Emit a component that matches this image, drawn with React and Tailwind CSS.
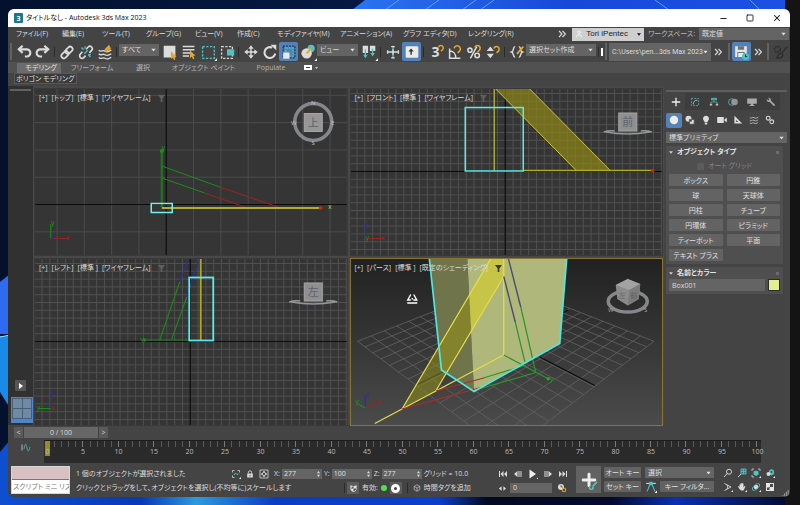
import React, { useState } from 'react';
import { Minus, Square, X, User, Plus } from 'lucide-react';

const TEAL = '#4fc3c3';
const GOLD = '#e5a82e';
const LIGHT = '#dcdcdc';

const menus = [
  'ファイル(F)',
  '編集(E)',
  'ツール(T)',
  'グループ(G)',
  'ビュー(V)',
  '作成(C)',
  'モディファイヤ(M)',
  'アニメーション(A)',
  'グラフ エディタ(D)',
  'レンダリング(R)',
];

const primitives = [
  'ボックス',
  '円錐',
  '球',
  '天球体',
  '円柱',
  'チューブ',
  '円環体',
  'ピラミッド',
  'ティーポット',
  '平面',
  'テキスト プラス',
];

// Every glyph is drawn on a 20x20 board
const glyphs = {
  undo: (
    <g fill="none" stroke={LIGHT} strokeWidth="2.4">
      <path d="M5 7h8a3.5 3.5 0 0 1 0 8h-2" />
      <path d="M8.5 3L4.2 7l4.3 4" />
    </g>
  ),
  redo: (
    <g fill="none" stroke={LIGHT} strokeWidth="2.4">
      <path d="M15 7H7a3.5 3.5 0 0 0 0 8h2" />
      <path d="M11.5 3l4.3 4-4.3 4" />
    </g>
  ),
  link: (
    <g fill="none" stroke={LIGHT} strokeWidth="1.9">
      <rect x="9.5" y="3.5" width="5.5" height="9" rx="2.7" transform="rotate(45 12.2 8)" />
      <rect x="5" y="8.5" width="5.5" height="9" rx="2.7" transform="rotate(45 7.7 13)" />
    </g>
  ),
  unlink: (
    <g fill="none" stroke={LIGHT} strokeWidth="1.8">
      <path d="M10 7l2.4-2.6a2.6 2.6 0 0 1 3.8 3.8L13.8 11" />
      <path d="M9.5 14l-2 2.2a2.6 2.6 0 0 1-3.8-3.8L6 9.8" />
      <path d="M5 5l2.5 2.5M12.5 13l2.5 2.5M8 12l4-4M9 3.500v2.500M15.500 13h-3" stroke={TEAL} strokeWidth="1.4" />
    </g>
  ),
  bind: (
    <g fill="none" stroke={LIGHT} strokeWidth="1.5">
      <path d="M3 8c3 3 4-1 7 1s4 0 7-1M3 12c3 3 4-1 7 1s4 0 7-1M3 16c3 3 4-1 7 1s4 0 7-1" />
      <path d="M10 8l5-5M11 10l5-5" stroke={GOLD} strokeWidth="2" />
    </g>
  ),
  pick: (
    <g>
      <path d="M3 3h13v13H3z" fill={LIGHT} />
      <path d="M11 9v9l2-2 1.500 3 1.500-.8-1.400-2.900h2.700z" fill={GOLD} />
    </g>
  ),
  byName: (
    <g>
      <path d="M3 4h13M3 7.500h13M3 11h9M3 14.500h7" stroke={LIGHT} strokeWidth="1.7" />
      <path d="M11 8v9l2-2 1.500 3 1.500-.8-1.400-2.900h2.700z" fill={GOLD} />
    </g>
  ),
  region: (
    <g>
      <path d="M4 4h13v13H4z" fill="none" stroke={TEAL} strokeWidth="1.5" strokeDasharray="2.500 1.600" />
      <path d="M20 17v3h-3z" fill="#fff" />
    </g>
  ),
  crossing: (
    <g>
      <path d="M4 4h12v13H4z" fill="none" stroke={LIGHT} strokeWidth="1.400" strokeDasharray="2.500 1.600" />
      <path d="M10 7h8v7h-8z" fill={TEAL} />
    </g>
  ),
  move: (
    <g fill={LIGHT}>
      <path d="M9.200 5h1.600v10H9.200zM5 9.200h10v1.600H5z" />
      <path d="M10 2.500l3 3.800H7zM10 17.500l3-3.800H7zM2.500 10l3.800-3v6zM17.500 10l-3.800-3v6z" />
    </g>
  ),
  rotate: (
    <g>
      <path d="M12.500 5.200a6 6 0 1 0 3.300 6.500" fill="none" stroke={LIGHT} strokeWidth="2.300" />
      <path d="M10.500 2h6.500v6z" fill={LIGHT} />
    </g>
  ),
  scale: (
    <g>
      <path d="M3.500 3.500h13v13h-13z" fill="none" stroke="#1e3a57" strokeWidth="1.500" strokeDasharray="2 1.300" />
      <path d="M6.500 5.500h8v9h-8z" fill="none" stroke={TEAL} strokeWidth="1.500" strokeDasharray="2 1.300" />
      <path d="M3.500 10.500h7v7h-7z" fill="#e8e8e8" />
    </g>
  ),
  place: (
    <g>
      <circle cx="13.500" cy="6" r="4" fill={TEAL} />
      <circle cx="8.500" cy="11.500" r="5.800" fill={LIGHT} />
      <path d="M8.500 11.500l5-5.500" stroke={GOLD} strokeWidth="2.200" />
      <path d="M20 17v3h-3z" fill="#fff" />
    </g>
  ),
  pivot: (
    <g>
      <path d="M3 3h6v8H3zM11 3h6v6h-6z" fill={LIGHT} />
      <path d="M6 7v8M14 6v7" stroke={TEAL} strokeWidth="1.500" />
      <path d="M6 17l-2.500-4h5zM14 15l-2.500-4h5z" fill={TEAL} />
      <path d="M20 17v3h-3z" fill="#fff" />
    </g>
  ),
  manipulate: (
    <g>
      <path d="M10 3v14" stroke={TEAL} strokeWidth="1.500" />
      <path d="M3.500 10h13M10 7v6M4 8v4M16 8v4M8 4h4M8 16.500h4" stroke={LIGHT} strokeWidth="1.500" />
    </g>
  ),
  keyboard: (
    <g>
      <rect x="3" y="3.500" width="14" height="13" rx="1.500" fill="#ecebe6" />
      <path d="M9 6l3 3.500H9.800V13H8.200V9.500H6z" fill="#333" />
    </g>
  ),
  angle: (
    <g fill="none" strokeWidth="1.700">
      <path d="M4 6v11h12M4 9c4 0 7 3 7 8" stroke={LIGHT} />
      <path d="M9 6a3.500 3.500 0 1 1 6 3l-2 2" stroke={GOLD} />
    </g>
  ),
  percent: (
    <g fill="none" strokeWidth="1.700">
      <path d="M13 4L6 17" stroke={LIGHT} />
      <circle cx="5.500" cy="8" r="2.300" stroke={LIGHT} />
      <circle cx="13.500" cy="14" r="2.500" stroke={LIGHT} />
      <path d="M11 5a3 3 0 1 1 5 3l-2 2" stroke={GOLD} />
    </g>
  ),
  spinner: (
    <g>
      <path d="M7 4l4 5H3zM7 17l4-5H3z" fill={LIGHT} />
      <path d="M11 6a3 3 0 1 1 5 3l-2 2" fill="none" stroke={GOLD} strokeWidth="1.700" />
    </g>
  ),
  braces: (
    <g fill="none" strokeWidth="1.600">
      <path d="M8 4C5 4 7 9 4 10c3 1 1 6 4 6M12 4c3 0 1 5 4 6-3 1-1 6-4 6" stroke={LIGHT} />
      <path d="M10 12l7-8" stroke={GOLD} strokeWidth="2" />
    </g>
  ),
  save: (
    <g>
      <path d="M3.500 3.500h13v12h-13z" fill="#e4e4e4" />
      <path d="M6.500 3.500h7v4h-7zM6 10h8v5.500H6z" fill="#69727c" />
      <path d="M7 11h6v4.500H7z" fill="#eee" />
      <circle cx="15" cy="15" r="4" fill={TEAL} />
      <path d="M15 12.800v2.400h2" stroke="#124" fill="none" />
    </g>
  ),
  brush: (
    <g fill="none" stroke="#2c2c2c" strokeWidth="1.600">
      <circle cx="6" cy="7" r="3.200" strokeDasharray="2 1" />
      <path d="M17 4l-6 7M9 11.500c3 0 4 2 2 4s-5 1-6 1c2-1 1-4 4-5z" />
    </g>
  ),
  plus: <path d="M10 3v14M3 10h14" stroke="#f0f0f0" strokeWidth="2.200" />,
  modify: (
    <g fill="none" strokeWidth="1.500">
      <path d="M4 4h12v12H4z" stroke={TEAL} strokeDasharray="3 2" />
      <path d="M7 14c0-5 3-7 7-7" stroke={LIGHT} />
    </g>
  ),
  hierarchy: (
    <g>
      <path d="M5 3h10v4H5z" fill={TEAL} />
      <path d="M10 7v3M5 13v-3h10v3" stroke={TEAL} fill="none" strokeWidth="1.500" />
      <path d="M3 13h4v3H3zM13 13h4v3h-4z" fill={LIGHT} />
    </g>
  ),
  motion: (
    <g>
      <circle cx="8" cy="10" r="5.500" fill="none" stroke={TEAL} strokeWidth="1.500" />
      <circle cx="12.500" cy="10" r="5.500" fill="#a8a8a8" />
    </g>
  ),
  display: <path d="M2 4h16v9H2zM8 13h4v2h2v1.500H6V15h2z" fill="#c4c4c4" />,
  wrench: (
    <path d="M3 5a4 4 0 0 0 5 5l7 7 2-2-7-7a4 4 0 0 0-5-5l2.500 2.500-2 2z" fill="#c0c0c0" />
  ),
  sphere: <circle cx="10" cy="10" r="7" fill="#ececec" />,
  shapes: (
    <g>
      <circle cx="7.500" cy="8" r="5" fill={LIGHT} />
      <path d="M9 9h8v8H9z" fill={LIGHT} stroke="#444" strokeWidth="1.200" />
      <circle cx="11" cy="11" r="2" fill="#444" />
    </g>
  ),
  light: (
    <path d="M10 3a5 5 0 0 1 3 9l-1 2H8l-1-2a5 5 0 0 1 3-9zM8 15h4v2.500H8z" fill={LIGHT} />
  ),
  camera: <path d="M2 5h11v10H2zM14 9l4-3v8l-4-3z" fill={LIGHT} />,
  helper: <path d="M4 3l13 13H4zM7 10v3.500h3.500z" fill={LIGHT} fillRule="evenodd" />,
  waves: (
    <path
      d="M3 6c3 3 4-2 7 0s4 1 7-1M3 10.500c3 3 4-2 7 0s4 1 7-1M3 15c3 3 4-2 7 0s4 1 7-1"
      fill="none"
      stroke="#c4c4c4"
      strokeWidth="1.400"
    />
  ),
  gears: (
    <g fill="none" stroke={LIGHT} strokeWidth="1.800">
      <circle cx="7" cy="7" r="3.200" />
      <circle cx="13" cy="13" r="3.200" />
    </g>
  ),
  isolate: (
    <g fill="none" stroke={LIGHT} strokeWidth="1.500">
      <path d="M3 7V3h4M13 3h4v4M3 13v4h4" />
      <path d="M6 12l3-4 3 3 3-1" stroke={TEAL} strokeWidth="2" />
      <path d="M20 16v4h-4z" fill="#fff" stroke="none" />
    </g>
  ),
  lock: (
    <g>
      <path d="M3 9h14v10H3z" fill={LIGHT} />
      <path d="M6 9V6a4 4 0 0 1 8 0v3" fill="none" stroke={LIGHT} strokeWidth="2.200" />
      <path d="M9 12h2v4H9z" fill="#444" />
    </g>
  ),
  absolute: (
    <g fill="none" stroke={LIGHT} strokeWidth="1.600">
      <path d="M2 2h16v16H2z" />
      <circle cx="10" cy="10" r="3.500" />
      <path d="M10 4v3M10 13v3M4 10h3M13 10h3" strokeWidth="2.500" />
    </g>
  ),
  first: <path d="M2 4h2v12H2zM11 4v12l-6-6zM18 4v12l-6-6z" fill={LIGHT} />,
  prev: <path d="M9 4v12l-7-6zM11 4h2v12h-2zM15 4h2v12h-2z" fill={LIGHT} />,
  play: <path d="M3 1l13 9-13 9zM20 17v3h-3z" fill="#f0f0f0" />,
  next: <path d="M3 4h2v12H3zM7 4h2v12H7zM11 4v12l7-6z" fill={LIGHT} />,
  last: <path d="M2 4v12l6-6zM9 4v12l6-6zM16 4h2v12h-2z" fill={LIGHT} />,
  keyMode: <path d="M8 5v10l-6-5zM12 5v10l6-5z" fill={LIGHT} />,
  timeConfig: (
    <g>
      <circle cx="8" cy="8" r="6" fill={LIGHT} />
      <path d="M8 4v4h4" fill="none" stroke="#444" strokeWidth="1.500" />
      <circle cx="14" cy="14" r="3.500" fill="#444" stroke={GOLD} strokeWidth="2.200" />
    </g>
  ),
  tangent: (
    <g fill="none" stroke={TEAL} strokeWidth="1.800">
      <path d="M3 17C6 16 6 5 10 5s4 11 7 12" />
      <path d="M2 4h16" stroke={LIGHT} />
      <path d="M8 2h4v4H8z" fill={TEAL} />
      <path d="M20 16v4h-4z" fill="#fff" stroke="none" />
    </g>
  ),
  zoomOne: (
    <g fill="none" stroke={LIGHT} strokeWidth="1.900">
      <circle cx="12" cy="7.500" r="5" />
      <path d="M8.500 11L2 18" />
    </g>
  ),
  zoomAll: (
    <g fill="none" stroke={TEAL} strokeWidth="1.800">
      <path d="M8 2h10v10H8zM13 2v10M8 7h10" fill="#35787a" />
      <path d="M8 12l-6 6" stroke={LIGHT} />
    </g>
  ),
  extents: (
    <g fill="none" stroke={LIGHT} strokeWidth="1.500">
      <path d="M2 6V2h4M14 2h4v4M2 14v4h4" />
      <path d="M5 7l5-2 5 2v6l-5 3-5-3z" fill={TEAL} stroke="none" />
      <path d="M20 16v4h-4z" fill="#fff" stroke="none" />
    </g>
  ),
  extentsAll: (
    <g>
      <path d="M8 5l5-3 5 3v7l-5 3-5-3z" fill={TEAL} />
      <circle cx="7" cy="12" r="4" fill={LIGHT} />
      <circle cx="13" cy="8" r="2" fill="#444" />
      <path d="M20 16v4h-4z" fill="#fff" />
    </g>
  ),
  fov: (
    <g>
      <path d="M3 3l13 7-13 7M8 6c2 3 2 5 0 8" fill="none" stroke={LIGHT} strokeWidth="1.800" />
      <path d="M20 16v4h-4z" fill="#fff" />
    </g>
  ),
  pan: (
    <g>
      <path d="M5 10V5h2v4-6h2v6-7h2v7-6h2v8l2-3 2 1-4 8H8l-4-4-2-4 1-1z" fill={LIGHT} />
      <path d="M20 16v4h-4z" fill="#fff" />
    </g>
  ),
  orbit: (
    <g>
      <circle cx="10" cy="10" r="4.500" fill={LIGHT} />
      <ellipse cx="10" cy="10" rx="9" ry="4" fill="none" stroke={TEAL} strokeWidth="1.800" transform="rotate(-40 10 10)" />
      <path d="M20 16v4h-4z" fill="#fff" />
    </g>
  ),
  maximize: (
    <g>
      <path d="M2 2h16v16H2z" fill="#e6e6e6" />
      <path d="M10 4h6v6h-6zM4 11h5v5H4z" fill="#4a4a4a" />
      <path d="M7 13l6-6" stroke="#4a4a4a" strokeWidth="1.500" />
    </g>
  ),
  shield: (
    <g>
      <path d="M3 3c5 2 9 2 14 0v7c0 4-3 6-7 8-4-2-7-4-7-8z" fill={LIGHT} />
      <path d="M10 4v6H3.500zM10 10h6c0 3-3 5-6 6z" fill="#555" />
    </g>
  ),
  cube: (
    <g fill="none" stroke={LIGHT} strokeWidth="1.500">
      <path d="M10 2l7 4v8l-7 4-7-4V6z" />
      <path d="M3 6l7 4 7-4M10 10v8" />
    </g>
  ),
  curve: (
    <g fill="none" strokeWidth="1.500">
      <path d="M2 3v12" stroke={LIGHT} />
      <path d="M6 12c2-12 4-12 6-2s4 6 6-2" stroke={TEAL} />
    </g>
  ),
};

const Glyph = ({ name, className = 'size-[18px]' }) => (
  <svg viewBox="0 0 20 20" className={`shrink-0 ${className}`} aria-hidden="true">
    {glyphs[name]}
  </svg>
);

const Tool = ({ name, active }) => (
  <button
    type="button"
    aria-label={name}
    className={`flex h-[19px] w-[19px] shrink-0 items-center justify-center rounded-xs ${
      active ? 'bg-[#5482b8]' : ''
    }`}
  >
    {name === 'snap' ? (
      <span className="relative font-['Open_Sans'] text-[14px] leading-none font-bold text-[#dcdcdc]">
        3
        <svg viewBox="0 0 10 10" className="absolute -top-px left-[6px] size-2">
          <path d="M2 4a3 3 0 1 1 5 3L5 9" fill="none" stroke={GOLD} strokeWidth="1.800" />
        </svg>
      </span>
    ) : (
      <Glyph name={name} />
    )}
  </button>
);

const Small = ({ name, className = 'size-[10px]' }) => (
  <button type="button" aria-label={name} className="flex shrink-0 items-center justify-center">
    <Glyph name={name} className={className} />
  </button>
);

const Sep = () => <span className="mx-[2px] h-[10px] w-px shrink-0 bg-[#2a2a2a]" />;
const Handle = () => <span className="mx-[2px] h-[17px] w-[2px] shrink-0 bg-[#626262]" />;

const Chevrons = () => (
  <svg viewBox="0 0 8 8" className="size-2 shrink-0" aria-hidden="true">
    <path d="M1 1l3 3-3 3M4.500 1l3 3-3 3" fill="none" stroke="#dcdcdc" strokeWidth="1.100" />
  </svg>
);

const Drop = ({ label, value, className = '' }) => (
  <div className={`relative flex shrink-0 items-stretch bg-[#646464] ${className}`}>
    <select
      aria-label={label}
      defaultValue={value}
      className="w-full appearance-none bg-transparent pr-2 pl-[3px] text-[#dcdcdc] outline-none"
    >
      <option>{value}</option>
    </select>
    <svg
      viewBox="0 0 6 4"
      className="pointer-events-none absolute top-1/2 right-[3px] h-[3px] w-[5px] -translate-y-1/2"
    >
      <path d="M0 0h6L3 4z" fill="#e0e0e0" />
    </svg>
  </div>
);

// Regular grid lines covering a box, counted out from the origin
const Grid = ({ box, origin, step, color }) => {
  const [x, y, w, h] = box;
  const lines = [];
  for (let i = -50; i <= 50; i++) {
    const gx = origin[0] + i * step;
    const gy = origin[1] + i * step;
    if (i && gx > x && gx < x + w) lines.push(`M${gx} ${y}v${h}`);
    if (i && gy > y && gy < y + h) lines.push(`M${x} ${gy}h${w}`);
  }
  return (
    <g fill="none">
      <path d={lines.join('')} stroke={color} strokeWidth="1" />
      <path d={`M${origin[0]} ${y}v${h}M${x} ${origin[1]}h${w}`} stroke="#0c0c0c" strokeWidth="1.200" />
    </g>
  );
};

const AxisText = ({ x, y, fill, children, size = 7 }) => (
  <text x={x} y={y} fill={fill} fontSize={size} textAnchor="middle" fontFamily="Open Sans, sans-serif">
    {children}
  </text>
);

const FlatCube = ({ x, y, face }) => (
  <g>
    <path d={`M${x - 24} ${y + 10}q5 -2 11 -1M${x + 24} ${y + 10}q-5 -2 -11 -1M${x - 22} ${y + 10}q22 4 44 0`} fill="none" stroke="#93979b" strokeWidth="1.500" />
    <rect x={x - 9} y={y - 9} width="18" height="18" fill="#8f8f8f" stroke="#a6a6a6" />
    <text x={x} y={y + 4} fill="#5c6470" fontSize="11" textAnchor="middle" fontFamily="Noto Sans CJK JP, sans-serif">
      {face}
    </text>
  </g>
);

const TopScene = () => (
  <>
    <rect x="35" y="89" width="312" height="168" fill="#353535" />
    <Grid box={[35, 89, 312, 168]} origin={[166.5, 204.5]} step={27.3} color="#4b4b4b" />
    <path d="M162 151v56" stroke="#1f7a1f" strokeWidth="2" />
    <circle cx="162" cy="151" r="2" fill="#179017" />
    <AxisText x="163.500" y="150" fill="#1c9a1c">y</AxisText>
    <path d="M162 166l58 21M162 178l43 15" stroke="#1f8a1f" />
    <path d="M220 187l58 20M205 193l40 14" stroke="#a32020" />
    <path d="M162 208h160" stroke="#b3ad2e" strokeWidth="2" />
    <circle cx="321" cy="208" r="1.800" fill="#d02020" />
    <AxisText x="330" y="209" fill="#c8c040">x</AxisText>
    <rect x="151.500" y="203.500" width="21" height="9" fill="none" stroke="#74f0f0" strokeWidth="1.500" />
    <path d="M51 238v-14" stroke="#1c8a1c" />
    <path d="M53 238.500h16" stroke="#a32020" />
    <AxisText x="53" y="225" fill="#1c9a1c">y</AxisText>
    <AxisText x="53" y="240" fill="#2a2ab8">z</AxisText>
    <AxisText x="68" y="240" fill="#a32020">x</AxisText>
    <circle cx="313.500" cy="122" r="18.500" fill="none" stroke="#85878b" strokeWidth="3.500" />
    <AxisText x="313.500" y="105" fill="#c0c0c0" size={6}>N</AxisText>
    <AxisText x="313.500" y="145" fill="#c0c0c0" size={6}>S</AxisText>
    <AxisText x="294" y="125" fill="#c0c0c0" size={6}>W</AxisText>
    <AxisText x="333" y="125" fill="#c0c0c0" size={6}>E</AxisText>
    <rect x="304.500" y="113.500" width="18" height="18" fill="#969696" stroke="#a6a6a6" />
    <text x="313.500" y="126.500" fill="#5c6470" fontSize="11" textAnchor="middle" fontFamily="Noto Sans CJK JP, sans-serif">
      上
    </text>
  </>
);

const FrontScene = () => (
  <>
    <rect x="351" y="89" width="312" height="168" fill="#353535" />
    <Grid box={[351, 89, 312, 168]} origin={[505.5, 171.5]} step={7.8} color="#505050" />
    <path d="M496 89h34l81 82h-34z" fill="#8a8418" fillOpacity="0.720" />
    <path d="M496 89l81 82M530 89l81 82" stroke="#c8c23a" />
    <path d="M494.500 89v82" stroke="#aaa52e" strokeWidth="1.500" />
    <path d="M523 170.500h129" stroke="#b3ad20" strokeWidth="1.300" />
    <circle cx="653" cy="170.500" r="1.800" fill="#d02020" />
    <rect x="465.500" y="107.500" width="58" height="63.500" fill="none" stroke="#5ceaea" strokeWidth="1.500" />
    <path d="M365.500 238v-15" stroke="#2a2ab8" />
    <path d="M368 238.500h15" stroke="#a32020" />
    <AxisText x="367.500" y="225" fill="#2a2ab8">z</AxisText>
    <AxisText x="367.500" y="240" fill="#1c9a1c">y</AxisText>
    <AxisText x="383" y="240" fill="#a32020">x</AxisText>
    <FlatCube x={628} y={122} face="前" />
  </>
);

const LeftScene = () => (
  <>
    <rect x="35" y="258" width="312" height="169" fill="#353535" />
    <Grid box={[35, 258, 312, 169]} origin={[190.5, 341.5]} step={7.8} color="#505050" />
    <path d="M189 258l-9 24M200 258l-13 39" stroke="#2c2ca0" strokeWidth="1.200" />
    <path d="M180 282l-20 58M187 297l-15 42M144 340h45" stroke="#1c861c" strokeWidth="1.200" />
    <AxisText x="142.500" y="342.500" fill="#1c9a1c">Y</AxisText>
    <circle cx="144.500" cy="340" r="1.800" fill="#179017" />
    <path d="M201 258v82" stroke="#b3a818" strokeWidth="1.800" />
    <rect x="189.500" y="277.500" width="24" height="63" fill="none" stroke="#5ceaea" strokeWidth="1.800" />
    <path d="M51.500 408v-16" stroke="#2a2ab8" />
    <path d="M39 408.500h12" stroke="#1c8a1c" />
    <AxisText x="53" y="395" fill="#2a2ab8">z</AxisText>
    <AxisText x="38.500" y="410" fill="#1c9a1c">y</AxisText>
    <AxisText x="53" y="410" fill="#a32020">x</AxisText>
    <FlatCube x={313.5} y={292} face="左" />
  </>
);

// Maps the unit square onto the ground plane's four corners
const groundCorners = [
  [357.7, 341.3],
  [506, 283.3],
  [654.3, 341.3],
  [506.7, 453],
];

const project = (u, v) => {
  const [[x0, y0], [x1, y1], [x2, y2], [x3, y3]] = groundCorners;
  const dx1 = x1 - x2;
  const dx2 = x3 - x2;
  const dx3 = x0 - x1 + x2 - x3;
  const dy1 = y1 - y2;
  const dy2 = y3 - y2;
  const dy3 = y0 - y1 + y2 - y3;
  const det = dx1 * dy2 - dx2 * dy1;
  const g = (dx3 * dy2 - dx2 * dy3) / det;
  const h = (dx1 * dy3 - dx3 * dy1) / det;
  const w = g * u + h * v + 1;
  return [
    ((x1 - x0 + g * x1) * u + (x3 - x0 + h * x3) * v + x0) / w,
    ((y1 - y0 + g * y1) * u + (y3 - y0 + h * y3) * v + y0) / w,
  ];
};

const GROUND_CELLS = 14;
const groundPath = Array.from({ length: GROUND_CELLS + 1 }, (_, i) => {
  const t = i / GROUND_CELLS;
  return `M${project(t, 0)}L${project(t, 1)}M${project(0, t)}L${project(1, t)}`;
}).join('');

const PerspectiveScene = () => (
  <>
    <defs>
      <linearGradient id="sky" x1="0" y1="0" x2="0" y2="1">
        <stop offset="0" stopColor="#212121" />
        <stop offset="1" stopColor="#4b4b4b" />
      </linearGradient>
    </defs>
    <rect x="350" y="258" width="313" height="169" fill="url(#sky)" />
    <path d={groundPath} fill="none" stroke="#626262" strokeWidth="0.800" />
    <path d="M416.700 385L568.300 310M540 357l55 28.500" stroke="#0c0c0c" strokeWidth="1.200" />
    <path d="M429.500 258h38l6.800 133.500-32.600-21.500z" fill="#6f744b" />
    <path d="M467.500 258h99.500l-7 85.500-85.700 48z" fill="#afb87a" />
    <path d="M491.500 258H504v18.500L435.700 391.500 402.300 409z" fill="#948f18" fillOpacity="0.550" />
    <path d="M491.500 258H504v18.500L471.500 331 469.500 294.500z" fill="#d6d44a" fillOpacity="0.700" />
    <path d="M491.500 258L402.300 409M504 276.500L435.700 391.500" stroke="#e6e04a" strokeWidth="1.200" />
    <path d="M504 258v97L375 423.500" fill="none" stroke="#e6e04a" strokeWidth="1.200" />
    <path d="M508.500 258l12.500 49M504 276.500l11.500 45.500" stroke="#4c4c6c" strokeWidth="1.400" />
    <path d="M521 307l15 65.500M515.500 322l10 41.500M504 355l44 23.500M536 372.500l-55 16M526.500 365l-43 13" stroke="#2c962c" strokeWidth="1.200" />
    <circle cx="548.500" cy="378.700" r="1.700" fill="#20b020" />
    <AxisText x="552" y="381" fill="#1c9a1c">y</AxisText>
    <path d="M436 391l48-13M402 409l79-21.500" stroke="#b02a2a" strokeWidth="1.200" />
    <path d="M429.500 258l12.200 112 32.600 21.500 85.700-48 7-85.500" fill="none" stroke="#4ee8e0" strokeWidth="1.700" />
    <path d="M365.500 408v-13" stroke="#2a2ab8" strokeWidth="1.200" />
    <path d="M365.500 408l13-6" stroke="#a32020" strokeWidth="1.200" />
    <path d="M365.500 408l-7-4" stroke="#1c8a1c" strokeWidth="1.200" />
    <AxisText x="367.500" y="397" fill="#2a2ab8">z</AxisText>
    <AxisText x="379" y="404" fill="#a32020">x</AxisText>
    <AxisText x="357.500" y="404" fill="#1c9a1c">y</AxisText>
    <path d="M411 294.500l-3 5.500h3M414 294.500l3 5.500h-3.500M412.500 298v1.500M407.500 303h10" fill="none" stroke="#fff" strokeWidth="1.400" />
    <ellipse cx="628" cy="301.500" rx="19.500" ry="10.500" fill="none" stroke="#85878b" strokeWidth="3.500" />
    <path d="M616 285l12-6 12.500 5-1.500 15-11 6.500L617.500 299z" fill="#8b8b8b" />
    <path d="M616 285l12-6 12.500 5-11 6z" fill="#a3a3a3" />
    <path d="M629.500 290l11-6-1.500 15-11 6.500z" fill="#7c7c7c" />
    <text x="622.500" y="298" fill="#666" fontSize="7" textAnchor="middle" fontFamily="Noto Sans CJK JP, sans-serif">左</text>
    <text x="634" y="298" fill="#606060" fontSize="7" textAnchor="middle" fontFamily="Noto Sans CJK JP, sans-serif">前</text>
    <AxisText x="611" y="312" fill="#a8a8a8" size={6}>W</AxisText>
    <AxisText x="646" y="312" fill="#a8a8a8" size={6}>S</AxisText>
  </>
);

const viewports = [
  { name: 'トップ', shading: 'ワイヤフレーム', box: '35 89 312 166', Scene: TopScene },
  { name: 'フロント', shading: 'ワイヤフレーム', box: '351 89 312 166', Scene: FrontScene },
  { name: 'レフト', shading: 'ワイヤフレーム', box: '35 259 312 166', Scene: LeftScene },
  { name: 'パース', shading: '既定のシェーディング', box: '351 259 312 166', Scene: PerspectiveScene },
];

const Viewport = ({ view, active, onSelect }) => {
  const { name, shading, box, Scene } = view;
  return (
    <section
      aria-label={name}
      onClick={onSelect}
      className={`relative min-h-0 min-w-0 overflow-hidden outline ${active ? 'outline-[#8a7430]' : 'outline-[#3a3a3a]'}`}
    >
      <svg viewBox={box} preserveAspectRatio="xMidYMid slice" className="block h-full w-full">
        <Scene />
      </svg>
      <div className="absolute top-[4px] left-[4px] flex items-center gap-1 whitespace-nowrap text-[#dcdcdc]">
        <button type="button">[+]</button>
        <button type="button">[{name}]</button>
        <button type="button">[標準 ]</button>
        <button type="button">[{shading}]</button>
        <svg viewBox="0 0 8 8" className="ml-[3px] size-[7px]">
          <path d="M0 0h8L5 4v4H3V4z" fill={active ? '#3c3c2c' : '#606060'} />
        </svg>
      </div>
    </section>
  );
};

const RolloutHeader = ({ children }) => (
  <h2 className="flex h-3 items-center gap-1 pr-1 pl-[3px] font-bold text-[#e4e4e4]">
    <svg viewBox="0 0 6 4" className="h-[3px] w-1">
      <path d="M0 0h6L3 4z" fill="#ccc" />
    </svg>
    <span className="flex-1">{children}</span>
    <span className="size-[3px] bg-[#6c6c6c]" />
  </h2>
);

const CommandPanel = () => {
  const [objectName, setObjectName] = useState('Box001');
  return (
    <aside className="flex w-[126px] shrink-0 flex-col bg-[#444] pt-[4px] pr-[3px] pl-[2px]">
      <span className="h-[2px] shrink-0 bg-[#5e5e5e]" />
      <div className="mt-px flex h-[17px] items-stretch">
        {['plus', 'modify', 'hierarchy', 'motion', 'display', 'wrench'].map((name, i) => (
          <button
            key={name}
            type="button"
            aria-label={name}
            className={`flex w-[19px] items-center justify-center ${i ? 'bg-[#3c3c3c] opacity-80' : ''}`}
          >
            <Glyph name={name} className="size-3" />
          </button>
        ))}
      </div>
      <div className="mt-[2px] flex h-4 items-center">
        {['sphere', 'shapes', 'light', 'camera', 'helper', 'waves', 'gears'].map((name, i) => (
          <button
            key={name}
            type="button"
            aria-label={name}
            className={`flex h-[15px] w-[16px] items-center justify-center rounded-xs ${i ? '' : 'bg-[#5482b8]'}`}
          >
            <Glyph name={name} className="size-3" />
          </button>
        ))}
      </div>
      <Drop label="カテゴリ" value="標準プリミティブ" className="mt-1 h-[11px]" />
      <div className="mt-[3px] mr-[4px] bg-[#4f4f4f] pb-[3px]">
        <RolloutHeader>オブジェクト タイプ</RolloutHeader>
        <label className="flex h-4 items-center justify-center gap-1 text-[#858585]">
          <input type="checkbox" disabled className="size-[7px] appearance-none bg-[#5c5c5c]" />
          オート グリッド
        </label>
        <div className="grid grid-cols-2 gap-x-1 gap-y-[3px] px-[3px]">
          {primitives.map((name) => (
            <button key={name} type="button" className="h-3 rounded-[1px] bg-[#636363] leading-none text-[#e0e0e0]">
              {name}
            </button>
          ))}
        </div>
      </div>
      <div className="mt-[3px] mr-[4px] bg-[#4f4f4f] pb-[3px]">
        <RolloutHeader>名前とカラー</RolloutHeader>
        <div className="flex items-center gap-[3px] px-[3px]">
          <input
            aria-label="名前"
            value={objectName}
            onChange={(e) => setObjectName(e.target.value)}
            className="h-3 min-w-0 flex-1 bg-[#646464] px-[3px] text-[#dcdcdc] outline-none"
          />
          <button type="button" aria-label="カラー" className="size-3 border border-[#2c2c2c] bg-[#e2f090]" />
        </div>
      </div>
    </aside>
  );
};

const TrackBar = () => (
  <div className="flex h-[23px] shrink-0 bg-[#444]">
    <div className="flex w-9 shrink-0 items-start justify-center pt-[3px]">
      <Glyph name="curve" className="size-[10px]" />
    </div>
    <div className="flex-1 border-t border-[#1c1c1c] bg-[#2a2a2a]">
      <div className="relative mr-[3px] ml-[3px] flex h-[6px] items-stretch justify-between">
        {Array.from({ length: 101 }, (_, i) => (
          <span key={i} className={`w-px ${i % 5 ? 'bg-[#5a5a5a]' : 'bg-[#7a7a7a]'}`} />
        ))}
        <span className="absolute top-0 -left-[2px] h-[15px] w-[5px] bg-[#948c2a]" />
      </div>
      <div className="relative mr-[3px] ml-[3px] flex h-[10px] items-center justify-between text-[7px] text-[#bdbdbd]">
        {Array.from({ length: 21 }, (_, i) => (
          <span key={i} className="flex w-px justify-center">
            {i * 5}
          </span>
        ))}
      </div>
    </div>
    <div className="w-[29px] shrink-0" />
  </div>
);

const Coord = ({ axis, value }) => (
  <label className="flex items-center gap-[2px]">
    {axis}:
    <span className="relative flex">
      <input
        type="text"
        defaultValue={value}
        className="h-[10px] w-[40px] bg-[#646464] pl-[2px] text-[#e0e0e0] outline-none"
      />
      <svg viewBox="0 0 4 8" className="absolute top-[2px] right-[2px] h-[6px] w-[3px]">
        <path d="M0 3l2-3 2 3zM0 5l2 3 2-3z" fill="#ddd" />
      </svg>
    </span>
  </label>
);

const StatusBar = () => {
  const keyButton = 'h-[11px] rounded-[1px] bg-[#626262] leading-none text-[#e0e0e0]';
  return (
    <footer className="flex h-[34px] shrink-0 bg-[#444] pt-[3px] pl-[3px] text-[#dcdcdc]">
      <div className="h-[28px] w-[59px] shrink-0 border border-[#d8d8d8] bg-white">
        <div className="h-3 bg-[#d9c0c3]" />
        <input
          aria-label="スクリプト ミニ リスナー"
          defaultValue="スクリプト ミニ リス"
          className="h-[13px] w-full border-t border-[#777] pl-px text-[#7a7a7a] outline-none"
        />
      </div>
      <div className="ml-[6px] flex w-[425px] shrink-0 flex-col">
        <div className="flex h-[15px] items-center">
          <span className="w-[155px]">1 個のオブジェクトが選択されました</span>
          <Small name="isolate" />
          <span className="mx-[5px]">
            <Small name="lock" className="size-[8px]" />
          </span>
          <Small name="absolute" />
          <div className="ml-[5px] flex items-center gap-[2px]">
            <Coord axis="X" value="277" />
            <Coord axis="Y" value="100" />
            <Coord axis="Z" value="277" />
            <span>グリッド = 10.0</span>
          </div>
        </div>
        <div className="flex h-[14px] items-center">
          <span className="w-[266px]">クリックとドラッグをして、オブジェクトを選択し(不均等に)スケールします</span>
          <Sep />
          <span className="flex size-3 items-center justify-center bg-[#5c5c5c]">
            <Glyph name="shield" className="size-[9px]" />
          </span>
          <span className="mx-[3px]">有効:</span>
          <span className="size-[6px] rounded-full bg-[#55dd55]" />
          <button type="button" aria-label="自動" className="mx-[3px] flex size-3 items-center justify-center bg-[#5c5c5c]">
            <span className="size-[9px] rounded-full border-3 border-white bg-[#444]" />
          </button>
          <Sep />
          <span className="mx-[3px]">
            <Glyph name="cube" className="size-[8px]" />
          </span>
          <button type="button">時間タグを追加</button>
        </div>
      </div>
      <div className="ml-[-3px] flex w-[75px] shrink-0 flex-col">
        <div className="flex h-[15px] items-center justify-between pr-[5px]">
          {['first', 'prev', 'play', 'next', 'last'].map((name) => (
            <Small key={name} name={name} />
          ))}
        </div>
        <div className="flex h-[14px] items-center gap-[3px]">
          <Small name="keyMode" className="size-[9px]" />
          <input
            aria-label="現在のフレーム"
            defaultValue="0"
            className="h-[10px] w-[42px] bg-[#646464] pl-[3px] outline-none"
          />
          <span className="ml-[2px]">
            <Small name="timeConfig" />
          </span>
        </div>
      </div>
      <button
        type="button"
        aria-label="キーを設定"
        className="relative ml-[3px] flex h-[27px] w-[25px] shrink-0 items-center justify-center bg-[#626262]"
      >
        <Plus className="size-5 text-[#eee]" strokeWidth={3.5} />
        <svg viewBox="0 0 10 10" className="absolute right-[3px] bottom-[3px] size-[9px]">
          <path d="M9 1L4 6M1 6a2 2 0 1 0 3 0" fill="none" stroke={TEAL} strokeWidth="1.800" />
        </svg>
      </button>
      <div className="ml-[3px] flex w-[37px] shrink-0 flex-col gap-[3px] pt-px whitespace-nowrap">
        <button type="button" className={keyButton}>オート キー</button>
        <button type="button" className={keyButton}>セット キー</button>
      </div>
      <div className="ml-1 flex w-[69px] shrink-0 flex-col gap-[3px] pt-px">
        <Drop label="選択セット" value="選択" className="h-[11px]" />
        <div className="flex gap-[3px]">
          <Small name="tangent" className="size-[12px]" />
          <button type="button" className={`${keyButton} flex-1 whitespace-nowrap`}>キー フィルタ...</button>
        </div>
      </div>
      <div className="ml-[7px] grid h-[28px] w-[56px] shrink-0 grid-cols-4">
        {['zoomOne', 'zoomAll', 'extents', 'extentsAll', 'fov', 'pan', 'orbit', 'maximize'].map((name) => (
          <Small key={name} name={name} />
        ))}
      </div>
      <svg viewBox="0 0 8 8" className="mr-[1px] mb-[1px] ml-auto size-[7px] self-end">
        <path d="M7 1v7M5 3v5M3 5v3M1 7v1" stroke="#aaa" />
      </svg>
    </footer>
  );
};

const Desktop = () => (
  <svg viewBox="0 0 800 505" preserveAspectRatio="none" className="absolute inset-0 h-full w-full" aria-hidden="true">
    <defs>
      <linearGradient id="night" x1="0" y1="0" x2="1" y2="0">
        <stop offset="0" stopColor="#03112f" />
        <stop offset="1" stopColor="#08225c" />
      </linearGradient>
      <linearGradient id="bloom" x1="0" y1="0" x2="1" y2="0">
        <stop offset="0" stopColor="#2b74f0" />
        <stop offset="0.500" stopColor="#1848d8" />
        <stop offset="1" stopColor="#1c50e4" />
      </linearGradient>
      <linearGradient id="floor" x1="0" y1="0" x2="1" y2="0">
        <stop offset="0" stopColor="#0e4fd0" />
        <stop offset="0.180" stopColor="#0838b8" />
        <stop offset="0.250" stopColor="#2a9be0" />
        <stop offset="0.350" stopColor="#0a3cc4" />
        <stop offset="0.560" stopColor="#0c3ecc" />
        <stop offset="0.620" stopColor="#020a20" />
        <stop offset="0.780" stopColor="#030a30" />
        <stop offset="0.860" stopColor="#0b2fb4" />
        <stop offset="1" stopColor="#040c34" />
      </linearGradient>
    </defs>
    <rect width="800" height="505" fill="url(#night)" />
    <path d="M352 10l13-10h420v10z" fill="url(#bloom)" />
    <path d="M385 10l14-10M425 10l14-10M462 10l14-10M480 10l14-10M655 0l14 10M750 0l10 10" stroke="#5aa0ff" />
    <path d="M0 282l10-8v60H0z" fill="#2f6af0" />
    <path d="M0 336h10v72L0 392z" fill="#1a8ae8" />
    <path d="M0 337l10-2" stroke="#8fe0ff" />
    <path d="M0 452l10-12v65H0z" fill="#0e4fd0" />
    <path d="M0 495h785v10H0z" fill="url(#floor)" />
    <rect x="785" width="15" height="505" fill="#141414" />
  </svg>
);

const App = () => {
  const [activeView, setActiveView] = useState('パース');

  return (
    <div className="relative flex h-screen flex-col overflow-hidden pt-[9px] pr-[10px] pb-2 pl-2 font-['Open_Sans','Noto_Sans_CJK_JP',sans-serif] text-[7px] leading-[10px] [font-feature-settings:'palt']">
      <Desktop />
      <div className="relative flex min-h-0 flex-1 flex-col overflow-hidden rounded-md bg-[#444]">
        <header className="flex h-[18px] shrink-0 items-center bg-white pr-[8px] pl-[6px] text-[#111]">
          <span className="mr-[3px] flex h-[10px] w-[9px] items-center justify-center rounded-[1px] bg-[#127a94] leading-none font-bold text-white">
            3
          </span>
          <h1 className="flex-1">タイトルなし - Autodesk 3ds Max 2023</h1>
          <div className="flex gap-[18px]">
            <button type="button" aria-label="最小化">
              <Minus className="size-[9px]" strokeWidth={2.5} />
            </button>
            <button type="button" aria-label="最大化">
              <Square className="size-[8px]" strokeWidth={2.5} />
            </button>
            <button type="button" aria-label="閉じる">
              <X className="size-[10px]" strokeWidth={2.5} />
            </button>
          </div>
        </header>

        <div className="flex h-[14px] shrink-0 items-center text-[#dcdcdc]">
          <nav className="grid flex-1 grid-cols-[46px_40px_44px_49px_42px_40px_63px_63px_65px_50px] pl-2 whitespace-nowrap">
            {menus.map((label) => (
              <button key={label} type="button" className="text-left">
                {label}
              </button>
            ))}
          </nav>
          <span className="mr-[6px] flex">
            <Chevrons />
          </span>
          <button type="button" className="flex h-[13px] w-[72px] items-center bg-[#cfcfcf] px-[3px] text-[#222]">
            <User className="mr-[3px] size-[8px] text-white" />
            <span className="flex-1 text-left font-['Liberation_Sans'] text-[8px]">Tori iPentec</span>
            <svg viewBox="0 0 6 4" className="h-[3px] w-1">
              <path d="M0 0h6L3 4z" fill="#111" />
            </svg>
          </button>
          <span className="mx-[4px] text-[#b8b8b8]">ワークスペース:</span>
          <Drop label="ワークスペース" value="既定値" className="mr-px h-[12px] w-[90px]" />
        </div>

        <div className="flex h-[21px] shrink-0 items-center bg-[#444]">
          <Handle />
          <Tool name="undo" />
          <Tool name="redo" />
          <Sep />
          <Tool name="link" />
          <Tool name="unlink" />
          <Tool name="bind" />
          <Sep />
          <Drop label="選択フィルタ" value="すべて" className="mr-px mb-[3px] h-3 w-10" />
          <Tool name="pick" />
          <Tool name="byName" />
          <Tool name="region" />
          <Tool name="crossing" />
          <Sep />
          <Tool name="move" />
          <Tool name="rotate" />
          <Tool name="scale" active />
          <Tool name="place" />
          <Drop label="参照座標系" value="ビュー" className="mr-px mb-[3px] h-3 w-[41px]" />
          <Tool name="pivot" />
          <Sep />
          <Tool name="manipulate" />
          <Tool name="keyboard" active />
          <Sep />
          <Tool name="snap" />
          <Tool name="angle" />
          <Tool name="percent" />
          <Tool name="spinner" />
          <Sep />
          <Tool name="braces" />
          <Drop label="名前付き選択セット" value="選択セット作成" className="mb-[3px] h-3 w-[70px]" />
          <Sep />
          <span className="h-2 w-[2px] bg-white" />
          <Handle />
          <Drop
            label="プロジェクト"
            value="C:\Users\pen...3ds Max 2023"
            className="h-[18px] w-[102px] font-['Roboto']"
          />
          <span className="flex flex-1 justify-center">
            <Chevrons />
          </span>
          <Handle />
          <Tool name="save" active />
          <span className="flex flex-1 justify-center">
            <Chevrons />
          </span>
          <Handle />
          <Tool name="brush" />
        </div>

        <div className="flex h-[11px] shrink-0 items-end bg-[#515151] pl-[9px] text-[#b4b4b4]">
          <button type="button" className="h-[10px] w-[44px] rounded-t-[1px] bg-[#6c6c6c] pl-1 text-[#e0e0e0]">
            モデリング
          </button>
          <button type="button" className="w-[62px]">フリーフォーム</button>
          <button type="button" className="w-[40px]">選択</button>
          <button type="button" className="w-[81px]">オブジェクト ペイント</button>
          <button type="button" className="w-[54px]">Populate</button>
          <button type="button" aria-label="リボン表示" className="mb-[3px] ml-[6px] flex items-center gap-[3px]">
            <span className="h-[5px] w-2 border-2 border-white bg-[#444]" />
            <svg viewBox="0 0 6 4" className="h-[2px] w-[3px]">
              <path d="M0 0h6L3 4z" fill="#ccc" />
            </svg>
          </button>
        </div>
        <div className="flex h-[13px] shrink-0 items-start bg-[#444] pl-[6px]">
          <button type="button" className="h-[11px] border border-[#585858] bg-[#3a3a3a] px-px leading-none whitespace-nowrap text-[#dcdcdc]">
            ポリゴン モデリング
          </button>
        </div>

        <main className="flex min-h-0 flex-1">
          <aside className="flex w-[26px] shrink-0 flex-col border-r border-[#4a4a4a] bg-[#313131] pt-[3px]">
            <span className="mx-[2px] h-[2px] bg-[#626262]" />
            <button type="button" aria-label="再生" className="mt-auto mb-[6px] ml-[7px] flex size-[11px] items-center justify-center rounded-[1px] bg-[#555]">
              <svg viewBox="0 0 4 6" className="h-[6px] w-1">
                <path d="M0 0l4 3-4 3z" fill="#fff" />
              </svg>
            </button>
            <button type="button" aria-label="ビューポート レイアウト" className="mb-[2px] ml-[3px] h-[26px] bg-[#4d86cc] p-px pb-[4px]">
              <span className="grid h-full grid-cols-2 gap-px border border-[#46607c] bg-[#46607c]">
                <span className="bg-[#708aa4]" />
                <span className="bg-[#708aa4]" />
                <span className="bg-[#708aa4]" />
                <span className="bg-[#708aa4]" />
              </span>
            </button>
          </aside>
          <div className="grid min-w-0 flex-1 grid-cols-2 grid-rows-2 gap-1 bg-[#484848] pt-[3px] pr-[2px] pl-px">
            {viewports.map((view) => (
              <Viewport
                key={view.name}
                view={view}
                active={activeView === view.name}
                onSelect={() => setActiveView(view.name)}
              />
            ))}
          </div>
          <CommandPanel />
        </main>

        <div className="flex h-[15px] shrink-0 items-center gap-px pl-[6px] text-[#dcdcdc]">
          <button type="button" className="h-[11px] w-[9px] bg-[#5a5a5a] leading-none">&lt;</button>
          <button type="button" className="h-[11px] w-[74px] bg-[#666] leading-none">0 / 100</button>
          <button type="button" className="h-[11px] w-[9px] bg-[#5a5a5a] leading-none">&gt;</button>
        </div>
        <TrackBar />
        <StatusBar />
      </div>
    </div>
  );
};

export default App;
